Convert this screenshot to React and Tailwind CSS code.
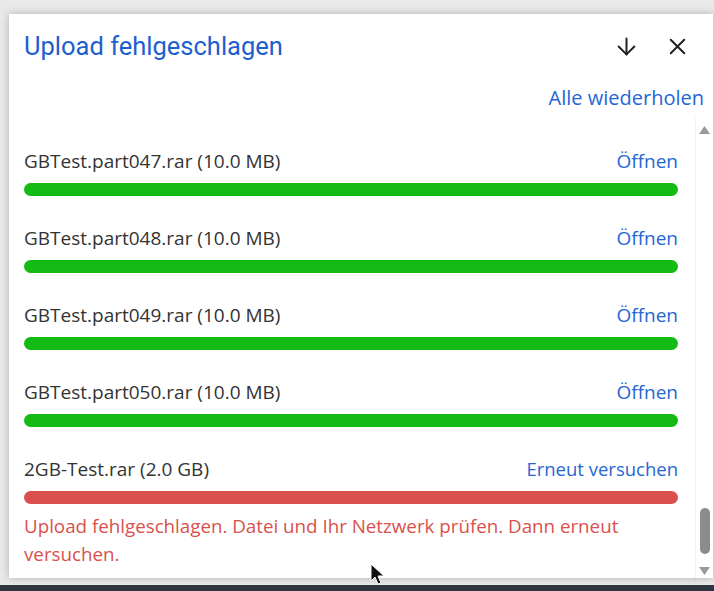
import { ArrowDown, X } from 'lucide-react'

const files = [
  { name: 'GBTest.part047.rar (10.0 MB)' },
  { name: 'GBTest.part048.rar (10.0 MB)' },
  { name: 'GBTest.part049.rar (10.0 MB)' },
  { name: 'GBTest.part050.rar (10.0 MB)' },
]

const FileRow = ({ name, action, failed }) => (
  <div className="flex flex-col">
    <div className="flex items-center justify-between h-[26px]">
      <span className="text-[19px] text-[#333]">{name}</span>
      <button className={`${failed ? 'text-[18.5px]' : 'text-[19px]'} text-[#2566d4]`}>{action}</button>
    </div>
    <div className={`mt-[9px] h-[13px] rounded-full ${failed ? 'bg-[#d9504c]' : 'bg-[#14bb14]'}`} />
  </div>
)

export default function App() {
  return (
    <div
      className="relative w-[714px] h-[591px] bg-[#e9e9e9] flex flex-col overflow-hidden"
      style={{ fontFamily: '"Open Sans", "Noto Sans", sans-serif' }}
    >
      <div className="h-[585px] pl-[9px] pt-[14px] pb-[7px]">
        <div className="h-full w-[704px] bg-white shadow-[0_0_8px_rgba(0,0,0,0.25)] flex flex-col overflow-hidden">
          {/* Header */}
          <div className="flex items-center justify-between pl-[15px] pr-[22px] h-[64px] shrink-0">
            <h1 className="text-[25.5px] text-[#1d5fcf]" style={{ fontFamily: 'Roboto, sans-serif' }}>
              Upload fehlgeschlagen
            </h1>
            <div className="flex items-center gap-[24px] text-[#222]">
              <ArrowDown size={27} strokeWidth={1.8} />
              <X size={27} strokeWidth={1.8} />
            </div>
          </div>
          <div className="flex justify-end pr-[9px] h-[40px] items-center shrink-0">
            <button className="text-[20px] font-medium text-[#2566d4]">Alle wiederholen</button>
          </div>

          {/* List with scrollbar */}
          <div className="flex-1 flex min-h-0 overflow-hidden">
            <div className="flex-1 pl-[15px] pr-[17px] pt-[30px] flex flex-col gap-[29px]">
              {files.map((f) => (
                <FileRow key={f.name} name={f.name} action="Öffnen" />
              ))}
              <div>
                <FileRow name="2GB-Test.rar (2.0 GB)" action="Erneut versuchen" failed />
                <p className="mt-[8px] text-[18.75px] leading-[28px] text-[#d9504c]">
                  Upload fehlgeschlagen. Datei und Ihr Netzwerk prüfen. Dann erneut versuchen.
                </p>
              </div>
            </div>
            <div className="w-[18px] flex flex-col items-center border-l border-[#f1f1f1] pb-[3px]">
              <svg width="11" height="8" viewBox="0 0 11 8" className="mt-[8px]">
                <path d="M5.5 0 L11 8 L0 8 Z" fill="#9a9a9a" />
              </svg>
              <div className="flex-1" />
              <div className="w-[10px] h-[46px] rounded-full bg-[#8c8c8c]" />
              <div className="h-[13px]" />
              <svg width="11" height="8" viewBox="0 0 11 8">
                <path d="M0 0 L11 0 L5.5 8 Z" fill="#9a9a9a" />
              </svg>
            </div>
          </div>
        </div>
      </div>
      <div className="h-[6px] bg-[#2e3440]" />

      {/* mouse cursor */}
      <svg className="absolute left-[370px] top-[563px]" width="16" height="24" viewBox="0 0 16 24">
        <path d="M1 1 L1 18 L5 14 L8 21 L11 20 L8 13 L14 13 Z" fill="#111" stroke="#fff" strokeWidth="1" />
      </svg>
    </div>
  )
}
